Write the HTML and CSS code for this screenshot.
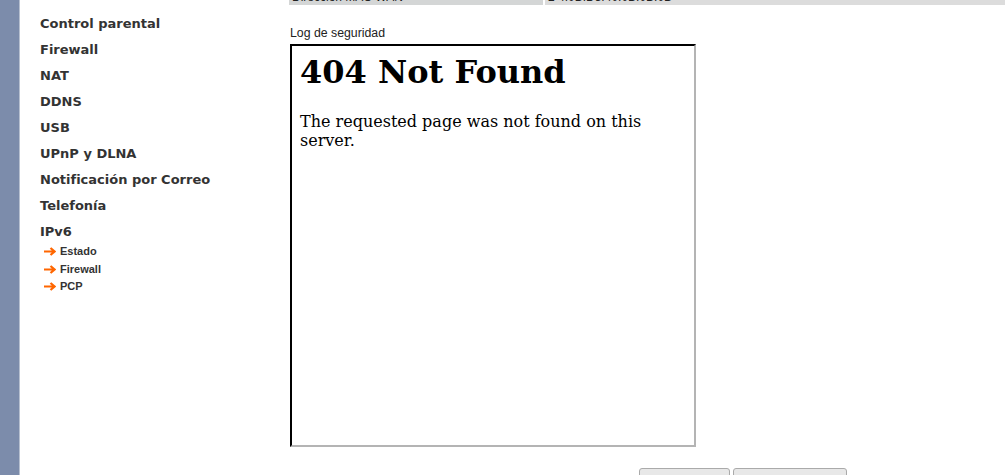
FILE: index.html
```html
<!DOCTYPE html>
<html lang="es">
<head>
<meta charset="utf-8">
<title>Log de seguridad</title>
<link rel="stylesheet" href="styles.css">
</head>
<body>
<div class="page">
  <div class="strip"></div>
  <nav class="sidebar">
    <ul class="menu">
      <li>Control parental</li>
      <li>Firewall</li>
      <li>NAT</li>
      <li>DDNS</li>
      <li>USB</li>
      <li>UPnP y DLNA</li>
      <li>Notificación por Correo</li>
      <li>Telefonía</li>
      <li>IPv6</li>
    </ul>
    <ul class="submenu">
      <li><svg class="arrow" viewBox="0 0 12 9" width="12" height="9"><path d="M0 4.5H10M6.5 1L10.5 4.5L6.5 8" fill="none" stroke="#ff6600" stroke-width="2.2"/></svg>Estado</li>
      <li><svg class="arrow" viewBox="0 0 12 9" width="12" height="9"><path d="M0 4.5H10M6.5 1L10.5 4.5L6.5 8" fill="none" stroke="#ff6600" stroke-width="2.2"/></svg>Firewall</li>
      <li><svg class="arrow" viewBox="0 0 12 9" width="12" height="9"><path d="M0 4.5H10M6.5 1L10.5 4.5L6.5 8" fill="none" stroke="#ff6600" stroke-width="2.2"/></svg>PCP</li>
    </ul>
  </nav>
  <main class="main">
    <div class="inforow">
      <div class="cell label-cell">Dirección MAC WAN</div>
      <div class="cell value-cell">2 4:0B:D3:40:0B:0B:0B</div>
    </div>
    <div class="loglabel">Log de seguridad</div>
    <div class="logframe">
      <h1>404 Not Found</h1>
      <p>The requested page was not found on this server.</p>
    </div>
    <div class="buttons">
      <button class="btn btn1">Actualizar</button>
      <button class="btn btn2">Borrar registro</button>
    </div>
  </main>
</div>
</body>
</html>
```
FILE: styles.css
```css
html, body {
  margin: 0;
  padding: 0;
  background: #ffffff;
  overflow: hidden;
}
.page {
  display: flex;
  height: 475px;
  overflow: hidden;
}
.strip {
  width: 19px;
  flex: none;
  background: #7c8cab;
  border-right: 1px solid #b7c0d0;
}
.sidebar {
  width: 269px;
  flex: none;
  padding-top: 11px;
}
.menu, .submenu {
  list-style: none;
  margin: 0;
  padding: 0;
}
.menu li {
  font-family: "DejaVu Sans", sans-serif;
  font-weight: bold;
  font-size: 13px;
  color: #333333;
  line-height: 26px;
  padding-left: 20px;
}
.submenu {
  margin-top: -2px;
}
.submenu li {
  font-family: "Liberation Sans", Arial, sans-serif;
  font-weight: bold;
  font-size: 11px;
  color: #333333;
  line-height: 17.5px;
  padding-left: 24px;
  display: flex;
  align-items: center;
}
.arrow {
  margin-right: 4px;
  flex: none;
}
.main {
  flex: 1;
  padding-right: 2px;
  font-family: "Liberation Sans", Arial, sans-serif;
}
.inforow {
  display: flex;
  gap: 2px;
  margin-top: -11px;
  height: 16px;
}
.cell {
  font-size: 12px;
  line-height: 16px;
  color: #222;
  padding-left: 3px;
  white-space: nowrap;
  overflow: hidden;
}
.label-cell {
  width: 251px;
  background: #d4d6d6;
}
.value-cell {
  flex: 1;
  background: #dcdcdc;
}
.loglabel {
  font-size: 12.3px;
  color: #222222;
  line-height: 14px;
  margin-top: 21px;
  margin-left: 1px;
  margin-bottom: 4px;
}
.logframe {
  width: 386px;
  height: 383px;
  margin-left: 1px;
  padding: 8px;
  border-style: solid;
  border-width: 2px;
  border-color: #000000 #b4b4b4 #b4b4b4 #000000;
  font-family: "DejaVu Serif", serif;
  color: #000000;
}
.logframe h1 {
  font-size: 32px;
  font-weight: bold;
  margin: 0 0 21px 0;
  line-height: 37px;
}
.logframe p {
  font-size: 16px;
  line-height: 19px;
  margin: 0;
}
.buttons {
  display: flex;
  gap: 3px;
  margin-top: 21px;
  margin-left: 350px;
}
.btn {
  height: 24px;
  border: 1px solid #aaaaaa;
  border-radius: 3px;
  background: #e8e8e8;
  font-family: "Liberation Sans", Arial, sans-serif;
  font-size: 12px;
  color: #222;
  padding: 0;
}
.btn1 {
  width: 91px;
}
.btn2 {
  width: 114px;
}
```
